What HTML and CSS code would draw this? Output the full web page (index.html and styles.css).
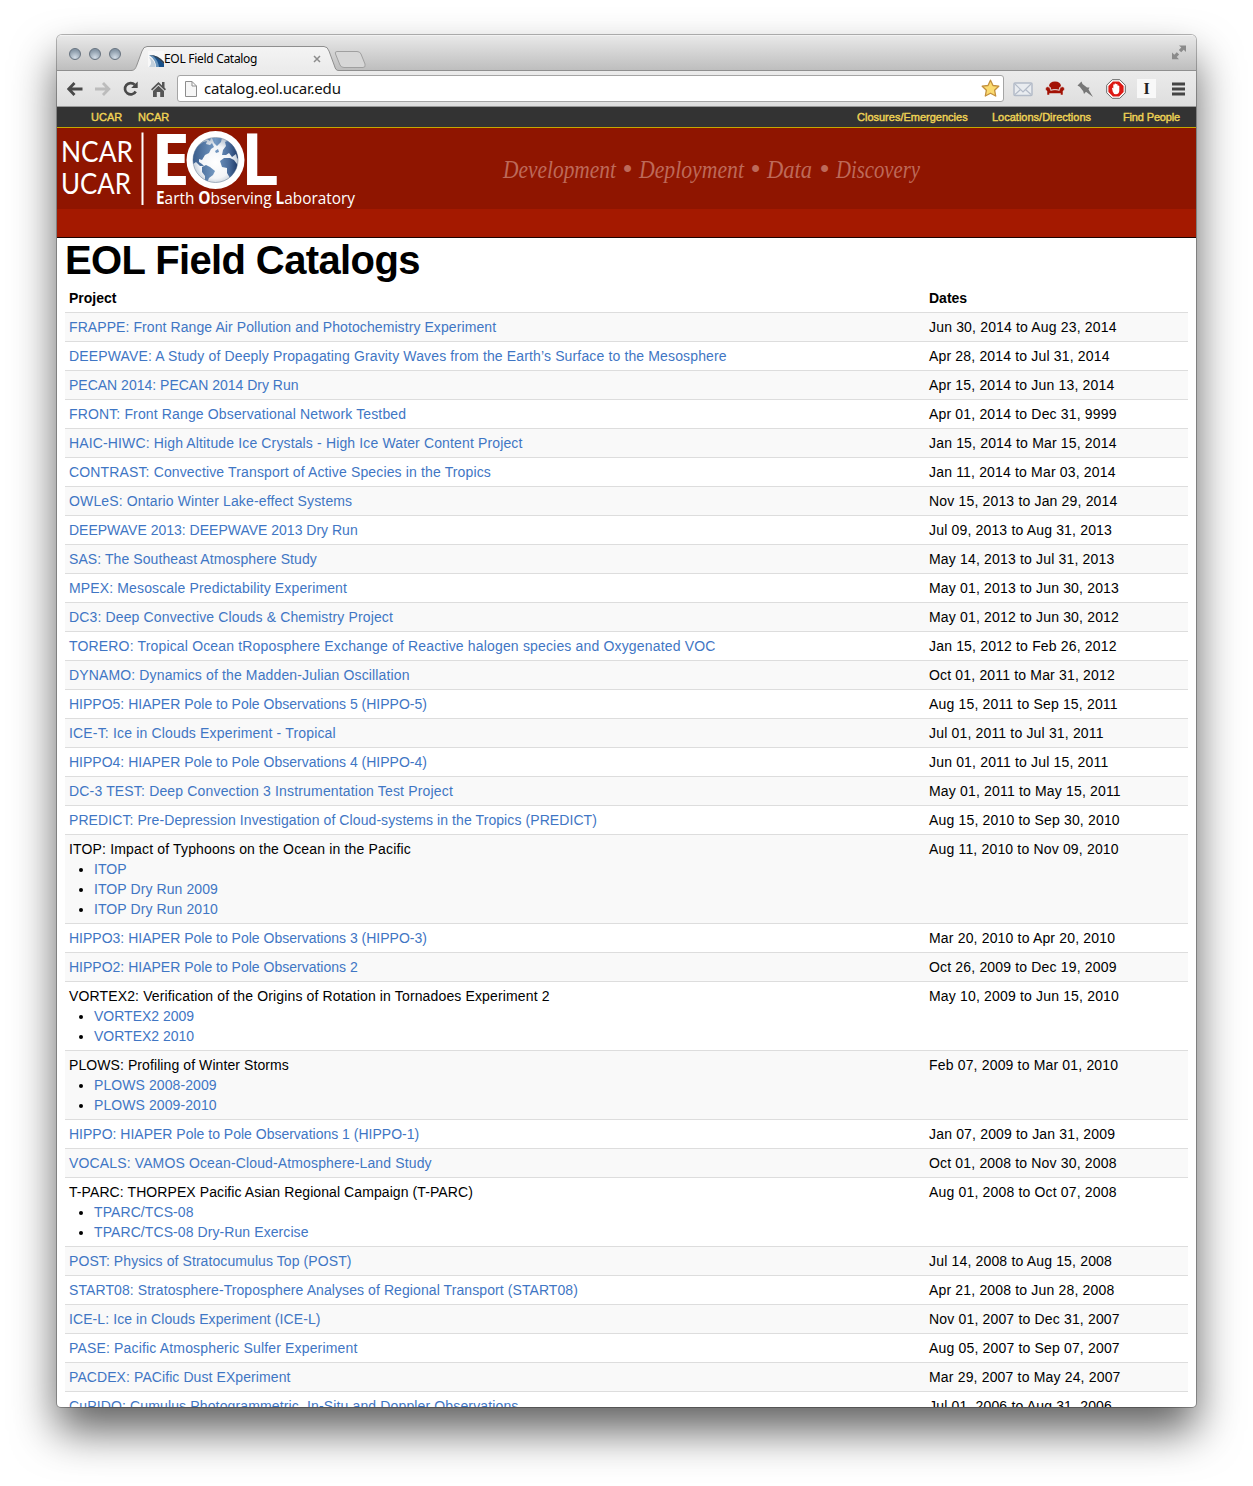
FILE: index.html
```html
<!DOCTYPE html>
<html lang="en">
<head>
<meta charset="utf-8">
<title>EOL Field Catalog</title>
<link rel="stylesheet" href="styles.css">
</head>
<body>
<div class="window">
  <div class="tabstrip">
    <div class="lights"><i></i><i></i><i></i></div>
    <div class="tab">
      <svg class="tab-shape" width="240" height="25" viewBox="0 0 240 25">
        <defs><linearGradient id="tb" x1="0" y1="0" x2="0" y2="1"><stop offset="0" stop-color="#f4f4f4"/><stop offset="1" stop-color="#ebebeb"/></linearGradient></defs>
        <path d="M0 25V24.500C4 24.500 4.500 22 5.500 20L11 5Q12.500 .5 16 .5H193Q196.500 .5 198 5L203.500 20C204.500 23 205 24.500 208 24.500V25Z" fill="url(#tb)"/>
        <path d="M0 24.500C4 24.500 4.500 22 5.500 20L11 5Q12.500 .5 16 .5H193Q196.500 .5 198 5L203.500 20C204.500 23 205 24.500 208 24.500" fill="none" stroke="#8f8f8f"/>
        <path d="M206 5.500H226Q229 5.500 230 8L234 18Q235 21.500 232 21.500H213Q210 21.500 209 19L204.500 8Q203.500 5.500 206 5.500Z" fill="#d7d7d7" stroke="#a0a0a0"/>
      </svg>
      <svg class="favicon" width="16" height="16" viewBox="0 0 16 16"><path d="M0 0H16V16H0Z" fill="#f8f8f8"/><path d="M1 4Q9 3 16 11V16H8Q8 9 1 4Z" fill="#6794bd"/><path d="M5 5Q12 7 16 13V16H11Q10 9 5 5Z" fill="#18508a"/><path d="M2 4Q10 6 16 13V11Q10 4 2 4Z" fill="#333e4a"/><path d="M1 6Q7 9 7.500 16H1Q5 12 1 6Z" fill="#c2d0dc"/></svg>
      <span class="tab-title">EOL Field Catalog</span>
      <svg class="tab-close" width="8" height="8" viewBox="0 0 8 8"><path d="M1 1L7 7M7 1L1 7" stroke="#8c8c8c" stroke-width="1.500"/></svg>
    </div>
    <svg class="expand" width="16" height="16" viewBox="0 0 16 16"><path d="M8 1.500H15V8L12.700 5.800L10.200 8.300L7.800 6L10.300 3.500Z" fill="#8b8b8b"/><path d="M1 8.500L3.300 10.700L5.800 8.200L8.200 10.500L5.700 13L8 15.300H1Z" fill="#8b8b8b"/></svg>
  </div>
  <div class="toolbar">
    <svg width="16" height="16" viewBox="0 0 16 16"><path d="M15.500 8H3M7.500 2L1.700 8L7.500 14" fill="none" stroke="#494949" stroke-width="2.800"/></svg>
    <svg width="16" height="16" viewBox="0 0 16 16"><path d="M0 8H13M8 2L13.800 8L8 14" fill="none" stroke="#bcbcbc" stroke-width="2.800"/></svg>
    <svg width="16" height="16" viewBox="0 0 16 16"><path d="M11.700 3.700A5.700 5.700 0 1 0 12.700 10.500" fill="none" stroke="#494949" stroke-width="2.700"/><path d="M14.700 .5V7H8.200Z" fill="#494949"/></svg>
    <svg width="16" height="16" viewBox="0 0 16 16"><path d="M7.500 1L11 4.500V1H13.500V6.500L15 8.200L13.800 9.500L7.500 3.500L1.200 9.500L0 8.200ZM7.500 4.800L13 10V16H9.200V11H5.800V16H2V10Z" fill="#555"/></svg>
    <div class="omnibox">
      <svg width="12" height="16" viewBox="0 0 12 16"><path d="M.5 .5H7L11.500 5V15.500H.5ZM7 .5V5H11.500" fill="#f6f6f6" stroke="#8d8d8d"/></svg>
      <span class="url">catalog.eol.ucar.edu</span>
      <svg width="19" height="19" viewBox="0 0 19 19"><path d="M9.500 1.200L12 6.500L17.800 7.200L13.600 11.200L14.700 17L9.500 14.200L4.300 17L5.400 11.200L1.200 7.200L7 6.500Z" fill="#fbdb70" stroke="#c3903d" stroke-width="1.300" stroke-linejoin="round"/></svg>
    </div>
    <div class="extensions">
      <svg width="20" height="16" viewBox="0 0 20 16"><rect x="1" y="2" width="18" height="12.500" rx="1" fill="#e9ecf0" stroke="#b3bbc8" stroke-width="1.500"/><path d="M2 3L10 11L18 3M2 13.500L7.500 8.500M18 13.500L12.500 8.500" fill="none" stroke="#b3bbc8" stroke-width="1.200"/></svg>
      <svg width="20" height="16" viewBox="0 0 20 16"><path d="M4 5Q4.500 .5 10 .5T16 5Q13.800 6 13.600 8.700Q10 7.300 6.400 8.700Q6.200 6 4 5Z" fill="#a31205"/><path d="M.5 8Q.5 5.800 2.700 5.800Q5.500 6 5.700 9.500Q10 8 14.300 9.500Q14.500 6 17.300 5.800Q19.500 5.800 19.500 8Q19.500 9.500 18 10V14H15.500V12.500H4.500V14H2V10Q.5 9.500 .5 8Z" fill="#a31205" stroke="#e6e6e6" stroke-width=".5"/></svg>
      <svg width="18" height="18" viewBox="0 0 18 18"><path d="M1.500 5.500L5.500 1.500L6.500 4L11 7.500L13.500 7.500L12.500 9.500L17 17L10 11.800L8 14L7.200 11.200L3.700 6.700Z" fill="#777"/></svg>
      <svg width="20" height="20" viewBox="0 0 20 20"><path d="M6.200 .7H13.800L19.300 6.200V13.800L13.800 19.300H6.200L.7 13.800V6.200Z" fill="#fff" stroke="#666"/><path d="M6.900 2.400H13.100L17.600 6.900V13.100L13.100 17.600H6.900L2.400 13.100V6.900Z" fill="#dd1914"/><path d="M6 9Q6.700 8.500 7.300 9.500V5.800Q8 4.800 8.600 5.800V4.800Q9.400 4 10.100 4.800V5.300Q11 4.700 11.600 5.600V6.800Q12.700 6 13.300 7V12Q12.700 15.300 10 15.300Q7.500 15.300 6.700 12.500Z" fill="#fff"/></svg>
      <span class="instapaper">I</span>
      <svg class="menu" width="13" height="14" viewBox="0 0 13 14"><path d="M0 2H13M0 7H13M0 12H13" stroke="#444" stroke-width="2.800"/></svg>
    </div>
  </div>
  <div class="orgbar">
    <a class="o1">UCAR</a><a class="o2">NCAR</a>
    <a class="o3">Closures/Emergencies</a><a class="o4">Locations/Directions</a><a class="o5">Find People</a>
  </div>
  <div class="banner">
    <svg width="900" height="81" viewBox="57 128 900 81">
      <defs>
        <radialGradient id="globe" cx=".5" cy=".55" r=".55"><stop offset="0" stop-color="#fff"/><stop offset=".65" stop-color="#f2f4f7"/><stop offset="1" stop-color="#b2bfce"/></radialGradient>
        <linearGradient id="land" gradientUnits="userSpaceOnUse" x1="193" y1="0" x2="238" y2="0"><stop offset="0" stop-color="#3a5d8c"/><stop offset=".5" stop-color="#7499c2"/><stop offset=".8" stop-color="#4a6c9b"/><stop offset="1" stop-color="#1f3a68"/></linearGradient>
        <clipPath id="disc"><circle cx="215.500" cy="160" r="22.500"/></clipPath>
      </defs>
      <g class="ncar"><text x="61" y="162" textLength="72" lengthAdjust="spacingAndGlyphs">NCAR</text><text x="61" y="193.500" textLength="70" lengthAdjust="spacingAndGlyphs">UCAR</text></g>
      <path d="M142.500 132.500V205" stroke="#fff" stroke-width="2"/>
      <text class="eol" x="151" y="185" textLength="39" lengthAdjust="spacingAndGlyphs">E</text>
      <text class="eol" x="241" y="185" textLength="38" lengthAdjust="spacingAndGlyphs">L</text>
      <circle cx="215.500" cy="160" r="29" fill="#fff"/>
      <circle cx="215.500" cy="160" r="22.500" fill="url(#globe)" stroke="#8293a8" stroke-width=".7"/>
      <g clip-path="url(#disc)" fill="url(#land)">
        <path d="M192 158L194 150L199 145L203 142L207 141L206 144L210 145L212 143L214 147L211 149L209 153L205 155L202 160L199 159L199 162L202 164L204 166L200 166L196 162L193 164Z"/>
        <path d="M202 167L206 165L210 167L215 171L213 175L209 178L207 183L205 181L205 176L202 172Z"/>
        <path d="M212 138H222L221 142L217 146L214 143ZM207 139L211 138L210 141ZM223 150L226 146L225 142L229 140L240 149V160L237 158L236 154L232 157L229 153L226 155L222 155Z"/>
        <path d="M220 161L224 158L230 158L234 160L237 164L238 168L233 176L230 178L227 173L227 168L222 167Z"/>
        <path d="M215 151L218 149L219 152L216 153Z"/>
      </g>
      <text class="lab" x="156" y="204" textLength="199" lengthAdjust="spacingAndGlyphs"><tspan>E</tspan>arth <tspan>O</tspan>bserving <tspan>L</tspan>aboratory</text>
      <g class="tagline">
        <text x="503" y="178" textLength="113" lengthAdjust="spacingAndGlyphs">Development</text>
        <text class="dot" x="627.500" y="179">•</text>
        <text x="639" y="178" textLength="105" lengthAdjust="spacingAndGlyphs">Deployment</text>
        <text class="dot" x="755.500" y="179">•</text>
        <text x="767" y="178" textLength="45" lengthAdjust="spacingAndGlyphs">Data</text>
        <text class="dot" x="824.500" y="179">•</text>
        <text x="836" y="178" textLength="84" lengthAdjust="spacingAndGlyphs">Discovery</text>
      </g>
    </svg>
  </div>
  <div class="subbar"></div>
  <div class="page">
    <h1>EOL Field Catalogs</h1>
    <table>
      <thead><tr><th>Project</th><th>Dates</th></tr></thead>
      <tbody>
      <tr><td class="snug"><a>FRAPPE: Front Range Air Pollution and Photochemistry Experiment</a></td><td>Jun 30, 2014 to Aug 23, 2014</td></tr>
      <tr><td><a>DEEPWAVE: A Study of Deeply Propagating Gravity Waves from the Earth’s Surface to the Mesosphere</a></td><td>Apr 28, 2014 to Jul 31, 2014</td></tr>
      <tr><td class="tight"><a>PECAN 2014: PECAN 2014 Dry Run</a></td><td>Apr 15, 2014 to Jun 13, 2014</td></tr>
      <tr><td><a>FRONT: Front Range Observational Network Testbed</a></td><td>Apr 01, 2014 to Dec 31, 9999</td></tr>
      <tr><td><a>HAIC-HIWC: High Altitude Ice Crystals - High Ice Water Content Project</a></td><td>Jan 15, 2014 to Mar 15, 2014</td></tr>
      <tr><td><a>CONTRAST: Convective Transport of Active Species in the Tropics</a></td><td>Jan 11, 2014 to Mar 03, 2014</td></tr>
      <tr><td><a>OWLeS: Ontario Winter Lake-effect Systems</a></td><td>Nov 15, 2013 to Jan 29, 2014</td></tr>
      <tr><td class="tight"><a>DEEPWAVE 2013: DEEPWAVE 2013 Dry Run</a></td><td>Jul 09, 2013 to Aug 31, 2013</td></tr>
      <tr><td class="snug"><a>SAS: The Southeast Atmosphere Study</a></td><td>May 14, 2013 to Jul 31, 2013</td></tr>
      <tr><td><a>MPEX: Mesoscale Predictability Experiment</a></td><td>May 01, 2013 to Jun 30, 2013</td></tr>
      <tr><td><a>DC3: Deep Convective Clouds &amp; Chemistry Project</a></td><td>May 01, 2012 to Jun 30, 2012</td></tr>
      <tr><td class="wide"><a>TORERO: Tropical Ocean tRoposphere Exchange of Reactive halogen species and Oxygenated VOC</a></td><td>Jan 15, 2012 to Feb 26, 2012</td></tr>
      <tr><td><a>DYNAMO: Dynamics of the Madden-Julian Oscillation</a></td><td>Oct 01, 2011 to Mar 31, 2012</td></tr>
      <tr><td class="tight"><a>HIPPO5: HIAPER Pole to Pole Observations 5 (HIPPO-5)</a></td><td>Aug 15, 2011 to Sep 15, 2011</td></tr>
      <tr><td class="wide"><a>ICE-T: Ice in Clouds Experiment - Tropical</a></td><td>Jul 01, 2011 to Jul 31, 2011</td></tr>
      <tr><td class="tight"><a>HIPPO4: HIAPER Pole to Pole Observations 4 (HIPPO-4)</a></td><td>Jun 01, 2011 to Jul 15, 2011</td></tr>
      <tr><td class="wide"><a>DC-3 TEST: Deep Convection 3 Instrumentation Test Project</a></td><td>May 01, 2011 to May 15, 2011</td></tr>
      <tr><td class="snug"><a>PREDICT: Pre-Depression Investigation of Cloud-systems in the Tropics (PREDICT)</a></td><td>Aug 15, 2010 to Sep 30, 2010</td></tr>
      <tr><td class="wide">ITOP: Impact of Typhoons on the Ocean in the Pacific<ul><li><a>ITOP</a></li><li><a>ITOP Dry Run 2009</a></li><li><a>ITOP Dry Run 2010</a></li></ul></td><td>Aug 11, 2010 to Nov 09, 2010</td></tr>
      <tr><td class="tight"><a>HIPPO3: HIAPER Pole to Pole Observations 3 (HIPPO-3)</a></td><td>Mar 20, 2010 to Apr 20, 2010</td></tr>
      <tr><td class="tight"><a>HIPPO2: HIAPER Pole to Pole Observations 2</a></td><td>Oct 26, 2009 to Dec 19, 2009</td></tr>
      <tr><td>VORTEX2: Verification of the Origins of Rotation in Tornadoes Experiment 2<ul class="tight"><li><a>VORTEX2 2009</a></li><li><a>VORTEX2 2010</a></li></ul></td><td>May 10, 2009 to Jun 15, 2010</td></tr>
      <tr><td class="snug">PLOWS: Profiling of Winter Storms<ul><li><a>PLOWS 2008-2009</a></li><li><a>PLOWS 2009-2010</a></li></ul></td><td>Feb 07, 2009 to Mar 01, 2010</td></tr>
      <tr><td class="tight"><a>HIPPO: HIAPER Pole to Pole Observations 1 (HIPPO-1)</a></td><td>Jan 07, 2009 to Jan 31, 2009</td></tr>
      <tr><td><a>VOCALS: VAMOS Ocean-Cloud-Atmosphere-Land Study</a></td><td>Oct 01, 2008 to Nov 30, 2008</td></tr>
      <tr><td class="snug">T-PARC: THORPEX Pacific Asian Regional Campaign (T-PARC)<ul><li><a>TPARC/TCS-08</a></li><li><a>TPARC/TCS-08 Dry-Run Exercise</a></li></ul></td><td>Aug 01, 2008 to Oct 07, 2008</td></tr>
      <tr><td class="snug"><a>POST: Physics of Stratocumulus Top (POST)</a></td><td>Jul 14, 2008 to Aug 15, 2008</td></tr>
      <tr><td class="snug"><a>START08: Stratosphere-Troposphere Analyses of Regional Transport (START08)</a></td><td>Apr 21, 2008 to Jun 28, 2008</td></tr>
      <tr><td class="snug"><a>ICE-L: Ice in Clouds Experiment (ICE-L)</a></td><td>Nov 01, 2007 to Dec 31, 2007</td></tr>
      <tr><td class="wide"><a>PASE: Pacific Atmospheric Sulfer Experiment</a></td><td>Aug 05, 2007 to Sep 07, 2007</td></tr>
      <tr><td class="snug"><a>PACDEX: PACific Dust EXperiment</a></td><td>Mar 29, 2007 to May 24, 2007</td></tr>
      <tr><td><a>CuPIDO: Cumulus Photogrammetric, In-Situ and Doppler Observations</a></td><td>Jul 01, 2006 to Aug 31, 2006</td></tr>
      </tbody>
    </table>
  </div>
</div>
</body>
</html>
```

FILE: styles.css
```css
* { box-sizing: border-box; }
html, body { height: 100%; }
body { margin: 0; padding: 35px 57px 0; background: #fff; overflow: hidden; font-family: "Liberation Sans", Arial, sans-serif; }
svg { display: block; flex: none; }

.window { width: 1139px; height: 1372px; overflow: hidden; border-radius: 5px 5px 4px 4px; background: #fff; box-shadow: 0 0 0 1px rgba(0,0,0,.28), 0 24px 44px rgba(0,0,0,.62); }

.tabstrip { display: flex; height: 36px; background: linear-gradient(#e8e8e8, #bebebe); border-top: 1px solid #f2f2f2; border-bottom: 1px solid #8f8f8f; }
.lights { display: flex; gap: 8px; width: 74px; padding: 12px 0 0 12px; }
.lights i { flex: none; width: 12px; height: 12px; border-radius: 50%; border: 1px solid #66727f; background: radial-gradient(circle at 50% 85%, #d4dee7, #8797a6 75%); }
.tab { position: relative; display: flex; align-items: center; width: 240px; height: 25px; margin-top: 10px; padding-left: 17px; }
.tab-shape { position: absolute; left: 0; top: 0; }
.favicon, .tab-title, .tab-close { position: relative; }
.tab-title { width: 149px; font: 12px/16px "Noto Sans", sans-serif; letter-spacing: -.3px; color: #000; white-space: nowrap; }
.expand { margin: 8px 9px 0 auto; }

.toolbar { display: flex; align-items: center; gap: 12px; height: 36px; padding: 0 11px 0 10px; background: linear-gradient(#ebebeb, #dedede); border-bottom: 1px solid #999; }
.omnibox { display: flex; align-items: center; width: 827px; height: 27px; margin-left: -2px; padding: 0 3px 0 7px; background: #fff; border: 1px solid #a5a5a5; border-radius: 3px; }
.url { flex: 1; padding: 0 0 2px 7px; font: 15px/20px "Noto Sans", sans-serif; letter-spacing: -.2px; color: #111; }
.extensions { display: flex; flex: 1; align-items: center; gap: 11.5px; margin-left: -3px; }
.menu { margin-left: auto; }
.instapaper { width: 19px; height: 19px; background: #f8f8f8; font: bold 16px/19px "Liberation Serif", serif; text-align: center; color: #222; }

.orgbar { display: flex; height: 21px; padding-left: 34px; background: #333; border-bottom: 1px solid #c6a800; font-size: 11px; line-height: 21px; color: #f0d455; white-space: nowrap; -webkit-text-stroke: .4px #f0d455; }
.o1 { width: 47px; }
.o2 { width: 719px; }
.o3 { width: 135px; }
.o4 { width: 131px; }
.o5 { letter-spacing: -.15px; }

.banner { height: 81px; background: #8f1500; }
.banner svg { overflow: visible; }
.subbar { height: 29px; background: #a41900; border-bottom: 1px solid #1c0300; }
.ncar { font: 28px Lato, sans-serif; fill: #fff; }
.eol { font: bold 71px "Open Sans", sans-serif; fill: #fff; }
.lab { font: 17px "Open Sans", sans-serif; fill: #fff; }
.lab tspan { font-weight: bold; }
.tagline { font: italic 25px "Liberation Serif", serif; fill: #bd6959; }
.dot { font: 29px "Liberation Serif", serif; text-anchor: middle; }

.page { padding: 0 8px; }
h1 { margin: 0; height: 45px; padding-top: 1px; font-size: 40px; line-height: 42px; letter-spacing: -.62px; color: #000; white-space: nowrap; }
table { width: 1123px; border-collapse: separate; border-spacing: 0; table-layout: fixed; font-size: 14px; line-height: 20px; color: #000; }
th, td { padding: 4px; vertical-align: top; text-align: left; white-space: nowrap; border-top: 1px solid #ddd; }
th { border-top: 0; padding-top: 5px; }
th:first-child { width: 860px; }
td { letter-spacing: .14px; }
td:last-child { letter-spacing: .17px; }
td.wide { letter-spacing: .165px; }
td.snug, td li { letter-spacing: .085px; }
td.tight, .tight li { letter-spacing: 0; }
tbody tr:nth-child(odd) td { background: #f9f9f9; }
td a { color: #3f76c4; }
ul { margin: 0 0 0 25px; padding: 0; }
```
